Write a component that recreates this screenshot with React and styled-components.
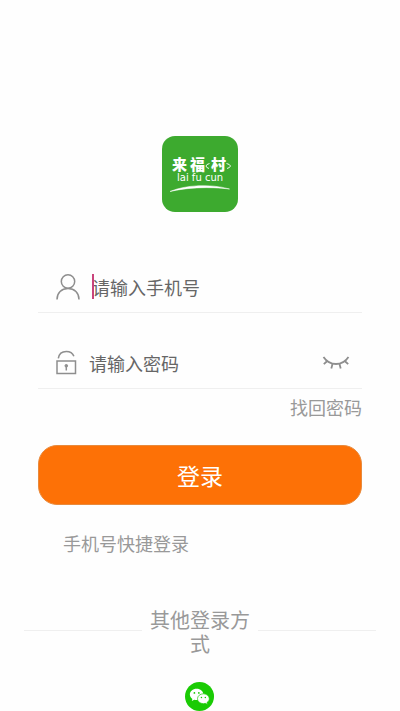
import React, { useState } from 'react';
import styled, { createGlobalStyle } from 'styled-components';

const GlobalStyle = createGlobalStyle`
  * {
    box-sizing: border-box;
  }

  body {
    margin: 0;
    background: #fefefe;
    font-family: "Noto Sans CJK SC", "Noto Sans", sans-serif;
  }

  button,
  input {
    font-family: inherit;
  }
`;

const Logo = () => (
  <LogoSvg viewBox="0 0 76 76" role="img" aria-label="来福村">
    <rect width="76" height="76" rx="13" fill="#3daa2f" />
    <LogoName y="34">
      <tspan x="10">来</tspan>
      <tspan x="28">福</tspan>
      <tspan x="49">村</tspan>
    </LogoName>
    <path
      d="M47.500 27.500q-3.500 1-3.500 2.500t3 2.500M64.500 27.500q3.500.8 4 2.500-.5 1.800-3.500 2.500"
      fill="none"
      stroke="#fff"
      strokeWidth=".9"
    />
    <LogoLatin x="15" y="45">lai fu cun</LogoLatin>
    <path d="M8 55.500C23 49 48 47.500 67.500 53 47 50.500 25 51.500 8 55.500z" fill="#fff" stroke="#fff" strokeWidth=".5" />
  </LogoSvg>
);

const UserIcon = () => (
  <Icon width="24" height="26" viewBox="0 0 24 26">
    <circle cx="12" cy="7.500" r="6.700" />
    <path d="M1 25.500c0-6.500 4.500-11 11-11s11 4.500 11 11" />
  </Icon>
);

const LockIcon = () => (
  <Icon width="22" height="26" viewBox="0 0 22 26">
    <path d="M1 11h18.500v12.500H1z" />
    <path d="M2.300 8.300C3 4 6.300 1.500 10.300 1.500c3.600 0 6.400 1.700 7.600 4.800" />
    <circle cx="10.300" cy="15.800" r="1.300" fill="#8e8e8e" strokeWidth="1" />
    <path d="M10.300 16v4.500" strokeWidth="1.500" />
  </Icon>
);

const ClosedEyeIcon = () => (
  <Icon width="28" height="16" viewBox="0 0 28 16" $weight={1.8}>
    <path d="M1.500 2C4.500 6.500 9 9 14 9s9.500-2.500 12.500-7" />
    <path d="M5.300 6l-3.500 3.200M22.700 6l3.500 3.200M10.500 9l-1.200 4.500M17.500 9l1.200 4.500" />
  </Icon>
);

const WechatIcon = () => (
  <svg width="30" height="29" viewBox="0 0 31 30" aria-hidden="true">
    <circle cx="15" cy="15" r="15" fill="#1acb04" />
    <path
      d="M12 7c-4 0-7 2.600-7 5.900 0 1.900 1 3.500 2.600 4.600L7 19.700l2.600-1.300c.8.200 1.600.300 2.400.300 4 0 7-2.600 7-5.800S16 7 12 7z"
      fill="#fff"
    />
    <path
      d="M19 12.200c-3.400 0-6.100 2.300-6.100 5.100s2.700 5.100 6.100 5.100c.7 0 1.400-.1 2-.3l2.300 1.200-.6-2c1.500-.9 2.400-2.400 2.400-4 0-2.800-2.700-5.100-6.100-5.100z"
      fill="#fff"
      stroke="#1acb04"
      strokeWidth=".7"
    />
    <g fill="#1acb04">
      <circle cx="9.700" cy="11.300" r=".9" />
      <circle cx="14.300" cy="11.300" r=".9" />
      <circle cx="17" cy="16" r=".8" />
      <circle cx="21" cy="16" r=".8" />
    </g>
  </svg>
);

const App = () => {
  const [phone, setPhone] = useState('');
  const [password, setPassword] = useState('');
  const [visible, setVisible] = useState(false);

  return (
    <>
      <GlobalStyle />
      <Page>
        <Logo />
        <Form onSubmit={(e) => e.preventDefault()}>
          <Field>
            <UserIcon />
            <InputWrap $indent={12}>
              {!phone && <Caret />}
              <Input
                type="tel"
                aria-label="手机号"
                placeholder="请输入手机号"
                value={phone}
                onChange={(e) => setPhone(e.target.value)}
              />
            </InputWrap>
          </Field>
          <Field>
            <LockIcon />
            <InputWrap $indent={11}>
              <Input
                type={visible ? 'text' : 'password'}
                aria-label="密码"
                placeholder="请输入密码"
                value={password}
                onChange={(e) => setPassword(e.target.value)}
              />
            </InputWrap>
            <EyeButton type="button" aria-label="显示密码" onClick={() => setVisible(!visible)}>
              <ClosedEyeIcon />
            </EyeButton>
          </Field>
          <ForgotLink href="#forgot">找回密码</ForgotLink>
          <LoginButton type="submit">登录</LoginButton>
          <QuickLink href="#quick">手机号快捷登录</QuickLink>
        </Form>
        <Divider>
          <Line />
          <DividerText>其他登录方式</DividerText>
          <Line />
        </Divider>
        <WechatButton type="button" aria-label="微信登录">
          <WechatIcon />
        </WechatButton>
      </Page>
    </>
  );
};

const Page = styled.main`
  display: flex;
  flex-direction: column;
  align-items: center;
  padding-top: 136px;
`;

const LogoSvg = styled.svg`
  width: 76px;
  height: 76px;
`;

const LogoName = styled.text`
  fill: #fff;
  font-size: 15px;
  font-weight: 900;
`;

const LogoLatin = styled.text`
  fill: #fff;
  font-family: "DejaVu Sans", sans-serif;
  font-size: 10px;
`;

const Form = styled.form`
  display: flex;
  flex-direction: column;
  align-self: stretch;
  padding: 25px 38px 0;
`;

const Field = styled.div`
  display: flex;
  align-items: center;
  height: 76px;
  padding: 24px 12px 0 18px;
  border-bottom: 1px solid #efefef;
`;

const Icon = styled.svg.attrs({ 'aria-hidden': true })`
  flex: none;
  fill: none;
  stroke: #8e8e8e;
  stroke-width: ${({ $weight }) => $weight || 1.5};
`;

const InputWrap = styled.div`
  position: relative;
  display: flex;
  flex: 1;
  min-width: 0;
  margin-left: ${({ $indent }) => $indent}px;
`;

const Caret = styled.span`
  position: absolute;
  top: 0;
  left: 0;
  width: 2px;
  height: 25px;
  background: #c9447c;
`;

const Input = styled.input`
  width: 100%;
  height: 26px;
  padding: 0;
  border: 0;
  outline: none;
  background: transparent;
  color: #333;
  font-size: 18px;

  &::placeholder {
    color: #666;
    opacity: 1;
  }
`;

const EyeButton = styled.button`
  display: flex;
  padding: 0;
  border: 0;
  background: none;
  cursor: pointer;
`;

const ForgotLink = styled.a`
  align-self: flex-end;
  margin-top: 5px;
  color: #999;
  font-size: 18px;
  line-height: 26px;
  text-decoration: none;
`;

const LoginButton = styled.button`
  height: 60px;
  margin-top: 25px;
  padding: 0 0 1px;
  border: 1px solid #e88a3c;
  border-radius: 19px;
  background: #fd7106;
  color: #fff;
  font-size: 23px;
  cursor: pointer;
`;

const QuickLink = styled.a`
  align-self: flex-start;
  margin: 25px 0 0 25px;
  color: #999;
  font-size: 18px;
  line-height: 26px;
  text-decoration: none;
`;

const Divider = styled.div`
  display: flex;
  align-items: center;
  align-self: stretch;
  margin-top: 52px;
  padding: 0 24px;
`;

const Line = styled.span`
  flex: 1;
  height: 1px;
  margin-bottom: 4px;
  background: #efefef;
`;

const DividerText = styled.span`
  width: 100px;
  margin: 0 8px;
  color: #999;
  font-size: 20px;
  line-height: 24px;
  text-align: center;
`;

const WechatButton = styled.button`
  display: flex;
  margin-top: 26px;
  padding: 0;
  border: 0;
  background: none;
  cursor: pointer;
`;

export default App;
